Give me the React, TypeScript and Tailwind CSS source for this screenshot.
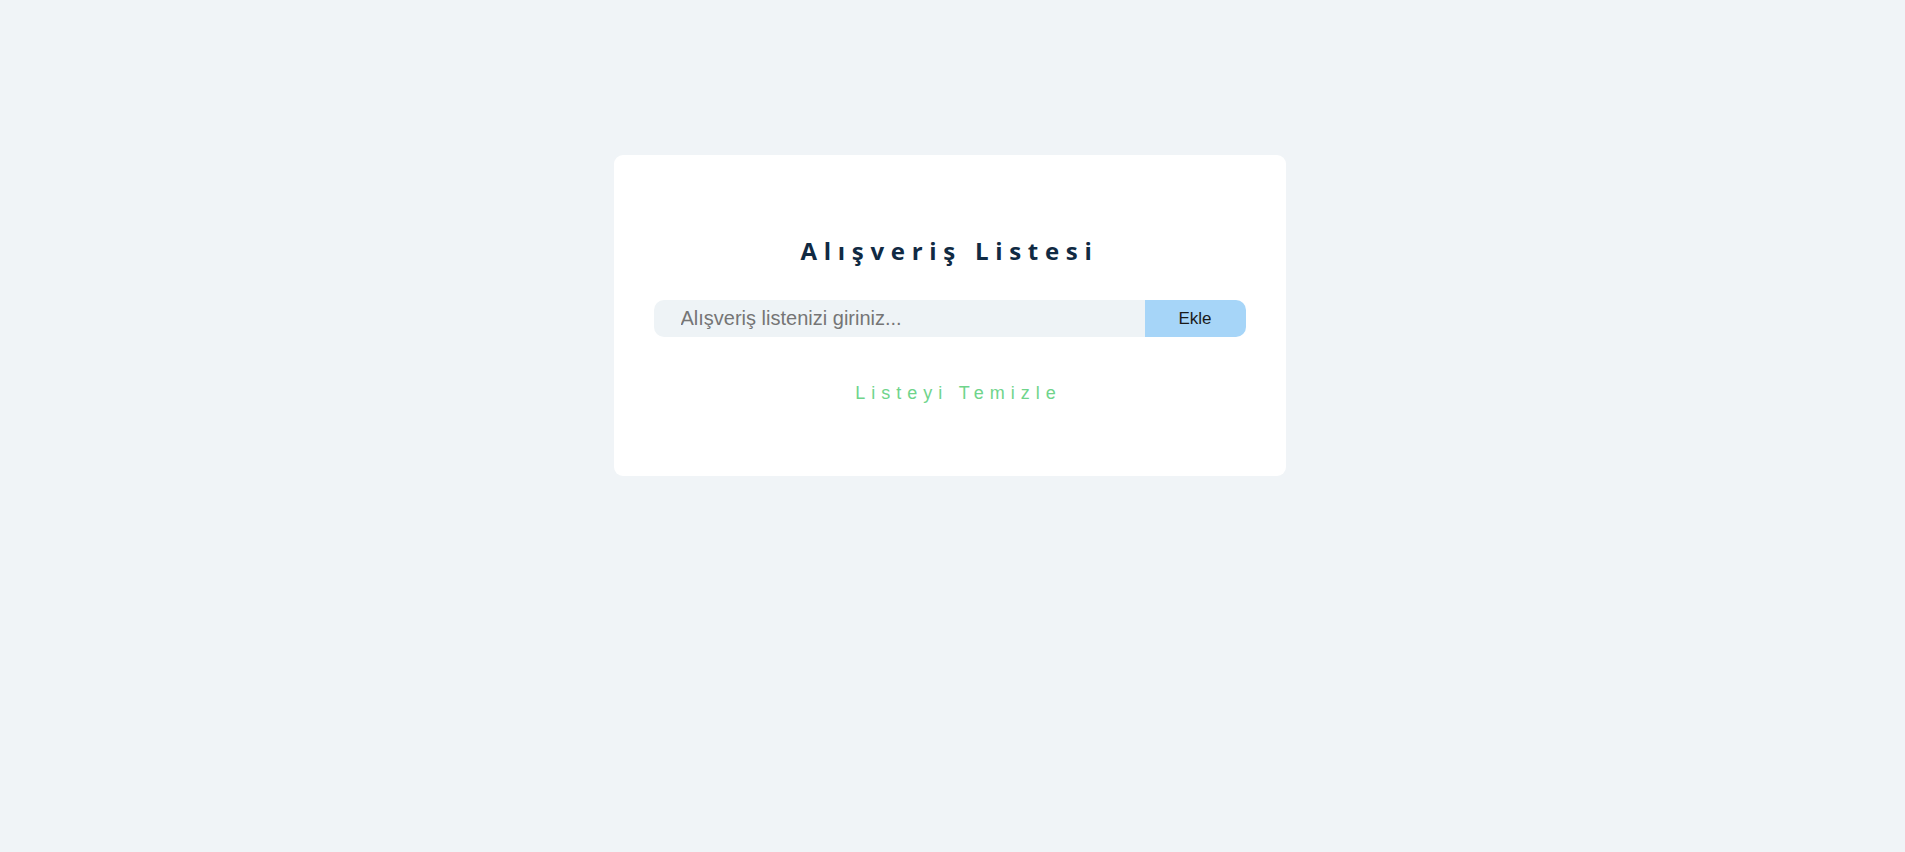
import React from "react";

export default function App() {
  return (
    <div className="min-h-[852px] w-full bg-[#f0f4f7] pt-[155px] font-['Liberation_Sans',Arial,sans-serif]">
      <div className="mx-auto w-[672px] -translate-x-[3px] rounded-[9px] bg-white px-[40px] pb-[72px] pt-[79px]">
        <h2 className="text-center font-['Open_Sans',sans-serif] text-[24px] font-bold leading-[33px] tracking-[6.7px] text-[#102a43]">
          Alışveriş Listesi
        </h2>
        <div className="mt-[33px] flex h-[37px]">
          <input
            type="text"
            placeholder="Alışveriş listenizi giriniz..."
            className="h-full min-w-0 flex-1 rounded-l-[10px] bg-[#eef3f6] pl-[27px] font-['Liberation_Sans',Arial,sans-serif] text-[20px] text-[#333] outline-none placeholder:text-[#757575]"
          />
          <button className="h-full w-[101px] rounded-r-[10px] bg-[#a6d5f8] font-['Liberation_Sans',Arial,sans-serif] text-[17px] text-[#1a1a1a]">
            Ekle
          </button>
        </div>
        <div className="mt-[46px] flex justify-center">
          <button className="ml-[18px] font-['Liberation_Sans',Arial,sans-serif] text-[18px] leading-[21px] tracking-[6px] text-[#6fd48b]">
            Listeyi Temizle
          </button>
        </div>
      </div>
    </div>
  );
}
